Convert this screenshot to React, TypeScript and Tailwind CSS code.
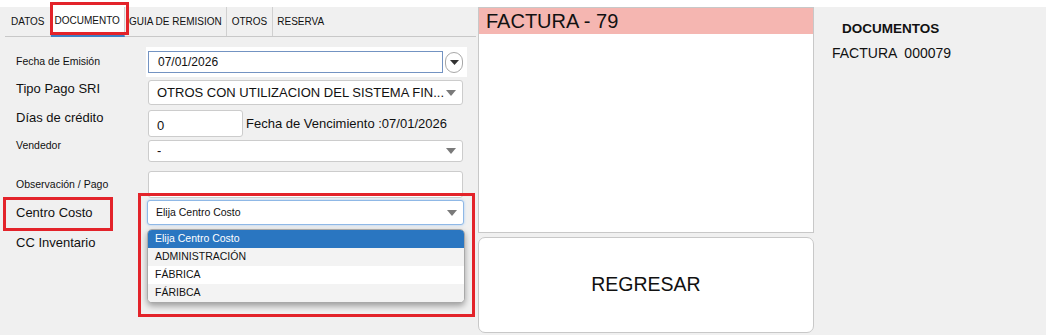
import React from 'react'

const tabs = ['DATOS', 'DOCUMENTO', 'GUIA DE REMISION', 'OTROS', 'RESERVA']

const opciones = ['Elija Centro Costo', 'ADMINISTRACIÓN', 'FÁBRICA', 'FÁRIBCA']

function Caret() {
  return (
    <svg width="10" height="6" viewBox="0 0 10 6" className="shrink-0">
      <polygon points="0,0 10,0 5,6" fill="#7a7a7a" />
    </svg>
  )
}

function Select({ value, w = 'w-[315px]', h = 'h-[25px]', text = 'text-[13px]', focus = false }: {
  value: string
  w?: string
  h?: string
  text?: string
  focus?: boolean
}) {
  return (
    <div
      className={`${w} ${h} ${text} flex items-center justify-between pl-[8px] pr-[6px] bg-white rounded-[3px] border ${
        focus ? 'border-[#8fb8e6] shadow-[0_0_3px_#a9cdf3]' : 'border-[#cccccc]'
      }`}
    >
      <span className="truncate">{value}</span>
      <Caret />
    </div>
  )
}

export default function App() {
  return (
    <div className="relative w-[1046px] h-[335px] overflow-hidden bg-[#f0f0f0] text-[#111] font-['Liberation_Sans',Arial,sans-serif]">
      <div className="h-[7px] bg-white" />

      <div className="flex h-[328px]">
        {/* Izquierda: tabs + formulario */}
        <div className="w-[478px] shrink-0">
          <div className="ml-[5px] mr-[2px] h-[30px] flex border-b border-[#c8c8c8]">
            {tabs.map((t, i) => (
              <div
                key={t}
                className={`flex items-center px-[4px] text-[10px] ${
                  i < tabs.length - 1 ? 'border-r border-[#d0d0d0]' : ''
                } ${i === 1 ? 'bg-white border-b-[3px] border-b-[#3c7fc4] -mb-px' : ''} ${i === 0 ? 'pl-[6px] pr-[5px]' : ''} ${
                  i === 3 ? 'px-[5px]' : ''
                }`}
              >
                {t}
              </div>
            ))}
          </div>

          <div className="pl-[16px]">
            {/* Fecha de Emisión */}
            <div className="mt-[10px] h-[30px] flex items-center">
              <div className="w-[130px] text-[10.5px]">Fecha de Emisión</div>
              <div className="w-[321px] h-[30px] bg-white flex items-center pl-[2px]">
                <div className="w-[295px] h-[22px] border border-[#7393c2] flex items-center pl-[9px] text-[12px]">
                  07/01/2026
                </div>
                <div className="ml-[2px] w-[18px] h-[21px] rounded-full border border-[#a8a8a8] flex items-center justify-center bg-white">
                  <svg width="9" height="5" viewBox="0 0 9 5">
                    <polygon points="0,0 9,0 4.5,5" fill="#333" />
                  </svg>
                </div>
              </div>
            </div>

            {/* Tipo Pago SRI */}
            <div className="mt-[3px] h-[25px] flex items-center">
              <div className="w-[132px] text-[13px] -mt-[7px]">Tipo Pago SRI</div>
              <Select value="OTROS CON UTILIZACION DEL SISTEMA FIN..." />
            </div>

            {/* Días de crédito */}
            <div className="mt-[5px] h-[27px] flex items-center">
              <div className="w-[132px] text-[13px] -mt-[12px]">Días de crédito</div>
              <div className="w-[95px] h-[27px] bg-white rounded-[3px] border border-[#cccccc] flex items-center pl-[8px] pt-[4px] text-[13px]">
                0
              </div>
              <div className="ml-[3px] text-[13px]">Fecha de Vencimiento :07/01/2026</div>
            </div>

            {/* Vendedor */}
            <div className="mt-[3px] h-[22px] flex items-start">
              <div className="w-[132px] text-[10.5px] leading-[13px] mt-[-1px]">Vendedor</div>
              <Select value="-" h="h-[22px]" />
            </div>

            {/* Observación */}
            <div className="mt-[9px] h-[27px] flex items-center">
              <div className="w-[132px] text-[10.5px]">Observación / Pago</div>
              <div className="w-[315px] h-[27px] bg-white rounded-[3px] border border-[#cccccc]" />
            </div>

            {/* Centro Costo */}
            <div className="mt-[2px] h-[25px] flex items-center">
              <div className="w-[131px] text-[13px]">Centro Costo</div>
              <div className="relative">
                <Select value="Elija Centro Costo" w="w-[317px]" text="text-[10.5px]" focus />
                <div className="absolute left-0 top-[29px] w-[318px] bg-white rounded-[5px] border border-[#a9a9a9] shadow-[0_3px_6px_rgba(0,0,0,0.35)] overflow-hidden z-10">
                  {opciones.map((o, i) => (
                    <div
                      key={o}
                      className={`h-[18px] flex items-center pl-[7px] text-[10.5px] ${
                        i === 0 ? 'bg-[#2a76c1] text-white' : i % 2 === 1 ? 'bg-[#f3f3f3]' : 'bg-white'
                      }`}
                    >
                      {o}
                    </div>
                  ))}
                </div>
              </div>
            </div>

            {/* CC Inventario */}
            <div className="mt-[6px] h-[24px] flex items-center">
              <div className="w-[132px] text-[13px]">CC Inventario</div>
            </div>
          </div>
        </div>

        {/* Centro: documento + regresar */}
        <div className="w-[336px] shrink-0 flex flex-col">
          <div className="h-[226px] border border-[#c8c8c8] bg-white flex flex-col">
            <div className="h-[26px] bg-[#f5b6b1] flex items-center pl-[7px] text-[20px]">FACTURA - 79</div>
          </div>
          <button className="mt-[4px] h-[96px] rounded-[7px] border border-[#c8c8c8] bg-white text-[19.5px] flex items-center justify-center">
            REGRESAR
          </button>
        </div>

        {/* Derecha */}
        <div className="flex-1 pl-[18px] pt-[14px]">
          <div className="ml-[10px] text-[13.5px] font-bold leading-[16px]">DOCUMENTOS</div>
          <div className="mt-[8px] text-[14px] leading-[16px] whitespace-pre">FACTURA  000079</div>
        </div>
      </div>

      {/* Marcas rojas */}
      <div className="absolute left-[50px] top-[2px] w-[79px] h-[33px] border-[3px] border-[#e3232a] pointer-events-none" />
      <div className="absolute left-[3px] top-[197px] w-[110px] h-[34px] border-[3px] border-[#e3232a] pointer-events-none" />
      <div className="absolute left-[138px] top-[193px] w-[337px] h-[124px] border-[3px] border-[#e3232a] pointer-events-none z-20" />
    </div>
  )
}
